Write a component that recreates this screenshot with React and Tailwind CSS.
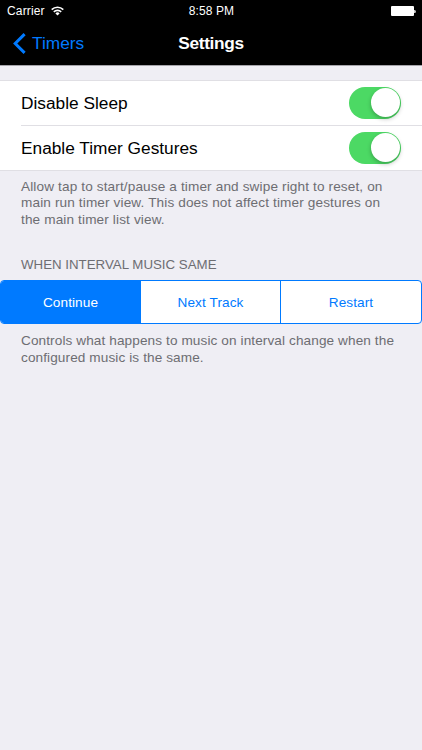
import React, { useState } from "react";

const Toggle = ({ checked, onChange, label }) => {
  return (
    <button
      role="switch"
      aria-checked={checked}
      aria-label={label}
      onClick={() => onChange(!checked)}
      className={`flex items-center w-[52px] h-8 mb-px p-[1.5px] rounded-full ${checked ? "justify-end bg-[#4cd964]" : "justify-start bg-[#e5e5ea]"}`}
    >
      <span className="w-[29px] h-[29px] rounded-full bg-white shadow-[0_2px_4px_rgba(0,0,0,0.25)]" />
    </button>
  );
};

const options = ["Continue", "Next Track", "Restart"];

const App = () => {
  const [disableSleep, setDisableSleep] = useState(true);
  const [gestures, setGestures] = useState(true);
  const [selected, setSelected] = useState("Continue");

  return (
    <div className="flex flex-col w-[422px] h-[750px] overflow-hidden bg-[#efeef4] font-['Liberation_Sans',Arial,sans-serif] text-[#6d6d72] whitespace-nowrap">
      <header className="h-[66px] shrink-0 bg-black border-b border-[#a5a4aa] text-white">
        <div className="grid grid-cols-3 items-center h-[22px] pl-[7px] pr-[6px] text-[12px]">
          <div className="flex items-center gap-[6px]">
            <span className="tracking-[0.15px]">Carrier</span>
            <svg className="-mt-px" width="13" height="10" viewBox="0 0 13 10" fill="none" stroke="white" strokeWidth="1.6">
              <path d="M0.7 3.6a8.3 8.3 0 0 1 11.6 0" />
              <path d="M2.8 5.9a5.3 5.3 0 0 1 7.4 0" />
              <path d="M6.5 9.5L4.4 7.4a3 3 0 0 1 4.2 0z" fill="white" stroke="none" />
            </svg>
          </div>
          <span className="text-center font-medium tracking-[0.1px]">8:58 PM</span>
          <div className="flex items-center justify-end">
            <span className="w-[23px] h-[10px] rounded-[1px] bg-white" />
            <span className="w-[2px] h-[3px] rounded-r-full bg-[#cccccc]" />
          </div>
        </div>
        <div className="grid grid-cols-3 items-center h-[43px] pl-[13px] pr-[13px]">
          <button className="flex items-center gap-[6px] text-[#007aff] text-[17.3px]">
            <svg width="13" height="21" viewBox="0 0 13 21" fill="none" stroke="currentColor" strokeWidth="3">
              <path d="M11.6 1.1L2.2 10.5L11.6 19.9" />
            </svg>
            <span>Timers</span>
          </button>
          <h1 className="text-center text-[17.3px] tracking-[-0.35px] font-bold">Settings</h1>
        </div>
      </header>

      <section className="mt-[14px] border-y border-[#e0dfe4] bg-white text-[17.3px] text-black">
        <div className="flex items-center justify-between h-[45px] ml-[21px] pr-[21px] border-b border-[#e0dfe4]">
          <span className="pt-[2px]">Disable Sleep</span>
          <Toggle label="Disable Sleep" checked={disableSleep} onChange={setDisableSleep} />
        </div>
        <div className="flex items-center justify-between h-[44px] ml-[21px] pr-[21px]">
          <span className="pt-[2px]">Enable Timer Gestures</span>
          <Toggle label="Enable Timer Gestures" checked={gestures} onChange={setGestures} />
        </div>
      </section>
      <p className="mt-[8px] ml-[21px] text-[13.6px] leading-[16.4px] tracking-[0.13px]">
        Allow tap to start/pause a timer and swipe right to reset, on<br />
        main run timer view. This does not affect timer gestures on<br />
        the main timer list view.
      </p>

      <h2 className="mt-[29px] ml-[21px] text-[13.3px] leading-[16px]">WHEN INTERVAL MUSIC SAME</h2>
      <div className="grid grid-cols-3 mt-[7px] h-[44px] shrink-0 rounded-[4px] border border-[#007aff] bg-white overflow-hidden text-[13.6px] divide-x divide-[#007aff]">
        {options.map((option) => (
          <button
            key={option}
            onClick={() => setSelected(option)}
            className={`pt-px tracking-[0.1px] ${selected === option ? "bg-[#007aff] text-white" : "text-[#007aff]"}`}
          >
            {option}
          </button>
        ))}
      </div>
      <p className="mt-[9px] ml-[21px] text-[13.6px] leading-[16.4px] tracking-[0.1px]">
        Controls what happens to music on interval change when the<br />
        configured music is the same.
      </p>
    </div>
  );
};

export default App;
